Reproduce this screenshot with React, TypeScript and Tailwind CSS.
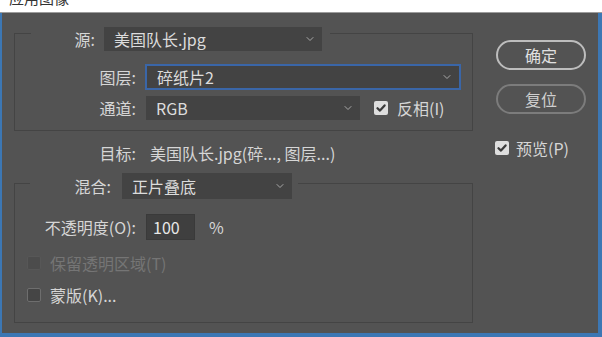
import { ChevronDown } from "lucide-react";

const Check = () => (
  <svg width="10" height="10" viewBox="0 0 10 10">
    <path d="M1.5 5.2 L4 7.6 L8.6 2.4" fill="none" stroke="#3a3a3a" strokeWidth="2.2" strokeLinecap="round" strokeLinejoin="round" />
  </svg>
);

const Box = ({ checked, disabled }: { checked?: boolean; disabled?: boolean }) =>
  checked ? (
    <div className="w-[14px] h-[14px] rounded-[2px] bg-[#dedede] flex items-center justify-center shrink-0">
      <Check />
    </div>
  ) : (
    <div
      className={
        disabled
          ? "w-[14px] h-[14px] rounded-[2px] bg-[#4c4c4c] border border-[#575757] shrink-0"
          : "w-[14px] h-[14px] rounded-[2px] bg-[#454545] border border-[#6e6e6e] shrink-0"
      }
    />
  );

const Select = ({ value, className }: { value: string; className: string }) => (
  <div className={`flex items-center bg-[#434343] pl-[10px] pr-[6px] shrink-0 ${className}`}>
    <span className="flex-1 text-[#dcdcdc]">{value}</span>
    <ChevronDown size={12} strokeWidth={2} color="#a8a8a8" />
  </div>
);

export default function App() {
  return (
    <div className="w-[602px] h-[337px] bg-[#535353] flex flex-col overflow-hidden text-[16px] leading-none text-[#d6d6d6] font-['Noto_Sans_CJK_SC','Noto_Sans',sans-serif]">
      <div className="h-[13px] bg-white border-b border-[#9c9c9c] overflow-hidden">
        <div className="-mt-[12px] ml-[9px] text-[15px] leading-[20px] text-[#333]">应用图像</div>
      </div>

      <div className="flex-1 flex border-l-2 border-r-4 border-b-4 border-[#3c77b4]">
        {/* left side */}
        <div className="w-[471px] shrink-0 flex flex-col">
          <div className="ml-[12px] mt-[20px] w-[459px] h-[98px] border border-[#444444] flex flex-col">
            <div className="-mt-[7px] ml-[16px] w-fit pr-[8px] bg-[#535353] flex items-center h-[24px]">
              <span className="w-[64px] text-right">源:</span>
              <Select value="美国队长.jpg" className="ml-[9px] w-[218px] h-[24px]" />
            </div>
            <div className="mt-[13px] flex items-center h-[26px]">
              <span className="w-[121px] text-right">图层:</span>
              <Select value="碎纸片2" className="ml-[9px] w-[316px] h-[26px] border-2 border-[#3a66a8]" />
            </div>
            <div className="mt-[6px] flex items-center h-[24px]">
              <span className="w-[121px] text-right">通道:</span>
              <Select value="RGB" className="ml-[10px] w-[214px] h-[24px]" />
              <div className="ml-[14px]">
                <Box checked />
              </div>
              <span className="ml-[9px]">反相(I)</span>
            </div>
          </div>

          <div className="mt-[10px] ml-[12px] flex items-center h-[24px]">
            <span className="w-[122px] text-right">目标:</span>
            <span className="ml-[14px]">美国队长.jpg(碎..., 图层...)</span>
          </div>

          <div className="ml-[12px] mt-[18px] w-[459px] h-[140px] border border-[#444444] flex flex-col">
            <div className="-mt-[11px] ml-[15px] w-fit pr-[6px] bg-[#535353] flex items-center h-[26px]">
              <span className="w-[81px] text-right">混合:</span>
              <Select value="正片叠底" className="ml-[11px] w-[170px] h-[26px]" />
            </div>
            <div className="mt-[15px] flex items-center h-[26px]">
              <span className="w-[121px] text-right">不透明度(O):</span>
              <div className="ml-[10px] w-[49px] h-[26px] bg-[#3f3f3f] border border-[#3a3a3a] flex items-center pl-[6px] text-[#e8e8e8]">
                100
              </div>
              <span className="ml-[14px]">%</span>
            </div>
            <div className="mt-[13px] flex items-center h-[20px] ml-[12px]">
              <Box disabled />
              <span className="ml-[9px] text-[#757575]">保留透明区域(T)</span>
            </div>
            <div className="mt-[12px] flex items-center h-[20px] ml-[12px]">
              <Box />
              <span className="ml-[9px]">蒙版(K)...</span>
            </div>
          </div>
        </div>

        {/* right side */}
        <div className="ml-[23px] pt-[27px] flex flex-col">
          <button className="w-[90px] h-[30px] rounded-full border-2 border-[#bdbdbd] text-[#e0e0e0] flex items-center justify-center">
            确定
          </button>
          <button className="mt-[14px] w-[90px] h-[30px] rounded-full border-2 border-[#7c7c7c] text-[#cfcfcf] flex items-center justify-center">
            复位
          </button>
          <div className="mt-[24px] -ml-[1px] flex items-center h-[20px]">
            <Box checked />
            <span className="ml-[7px]">预览(P)</span>
          </div>
        </div>
      </div>
    </div>
  );
}
